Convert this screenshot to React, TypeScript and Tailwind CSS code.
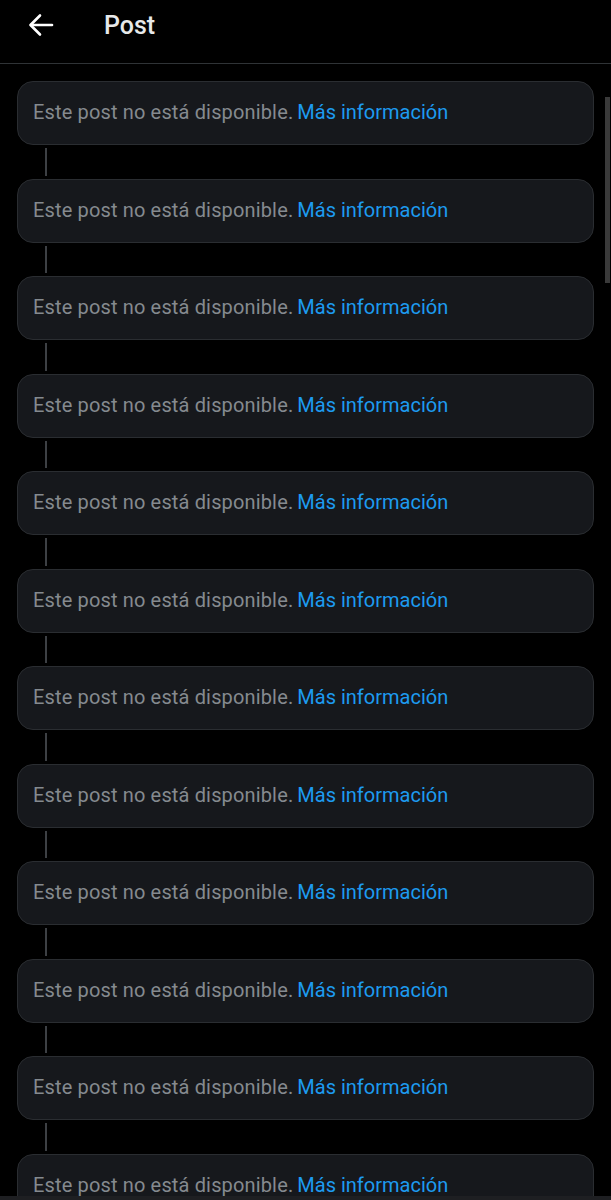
import React from "react";

export default function App() {
  const items = Array.from({ length: 12 });
  return (
    <div className="relative h-[1200px] w-[611px] overflow-hidden bg-black" style={{ fontFamily: "Roboto, 'Noto Sans', sans-serif" }}>
      <header className="flex h-[64px] items-center border-b border-[#2f3336] pb-[13px]">
        <div className="ml-[28px] flex h-[24px] w-[26px] items-center">
          <svg width="26" height="24" viewBox="0 0 26 24" fill="none" stroke="#ffffff" strokeWidth="2.6" strokeLinecap="round" strokeLinejoin="round">
            <path d="M24 12H3" />
            <path d="M12 2.5L2.5 12L12 21.5" />
          </svg>
        </div>
        <h1 className="ml-[50px] text-[25px] font-medium leading-none text-[#e7e9ea]">Post</h1>
      </header>
      <div className="flex flex-col pl-[17px] pr-[17px] pt-[17px]">
        {items.map((_, i) => (
          <React.Fragment key={i}>
            <div className="flex h-[64px] w-[577px] shrink-0 items-center rounded-[16px] border border-[#2a2d31] bg-[#16181c] pb-[2px] pl-[15px] text-[20px]">
              <span className="tracking-[0.15px] text-[#858a8f]">Este post no está disponible.</span>
              <span className="ml-[4px] text-[#1d9bf0]">Más información</span>
            </div>
            {i < items.length - 1 && (
              <div className={`flex shrink-0 ${i % 2 === 0 ? "h-[34px]" : "h-[33px]"} pl-[28px]`}>
                <div className="mt-[3px] mb-[3px] w-[2px] bg-[#3d4044]" />
              </div>
            )}
          </React.Fragment>
        ))}
      </div>
      <div className="absolute right-[1px] top-[97px] h-[186px] w-[5px] bg-[#3a3a3a]" />
      <div className="absolute bottom-0 left-0 h-[4px] w-full bg-[#1e1f22]" />
    </div>
  );
}
